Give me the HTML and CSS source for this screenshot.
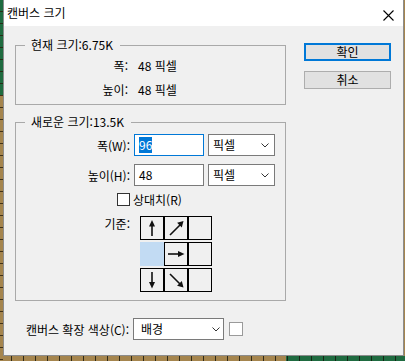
FILE: index.html
```html
<!DOCTYPE html>
<html lang="ko">
<head>
<meta charset="utf-8">
<title>캔버스 크기</title>
<link rel="stylesheet" href="styles.css">
</head>
<body>
<div class="desktop">
  <div class="dialog">
    <div class="titlebar">
      <span class="title">캔버스 크기</span>
      <svg class="close" width="11" height="11" viewBox="0 0 11 11"><path d="M0.5 0.5 L10.5 10.5 M10.5 0.5 L0.5 10.5" stroke="#000" stroke-width="1.1" fill="none"/></svg>
    </div>
    <div class="body">
      <div class="groups">
        <fieldset class="group g1">
          <legend>현재 크기:6.75K</legend>
          <div class="info-row"><span class="info-lbl">폭:</span><span class="info-val">48 픽셀</span></div>
          <div class="info-row"><span class="info-lbl">높이:</span><span class="info-val">48 픽셀</span></div>
        </fieldset>
        <fieldset class="group g2">
          <legend>새로운 크기:13.5K</legend>
          <div class="field-row first">
            <span class="field-lbl">폭(W):</span>
            <div class="input focus"><span class="sel">96</span></div>
            <div class="select unit"><span>픽셀</span><svg class="chev" width="8" height="5" viewBox="0 0 8 5"><path d="M0.5 0.5 L4 4 L7.5 0.5" stroke="#333" fill="none"/></svg></div>
          </div>
          <div class="field-row">
            <span class="field-lbl">높이(H):</span>
            <div class="input"><span>48</span></div>
            <div class="select unit"><span>픽셀</span><svg class="chev" width="8" height="5" viewBox="0 0 8 5"><path d="M0.5 0.5 L4 4 L7.5 0.5" stroke="#333" fill="none"/></svg></div>
          </div>
          <div class="check-row">
            <span class="checkbox"></span><span class="check-lbl">상대치(R)</span>
          </div>
          <div class="anchor-row">
            <span class="anchor-lbl">기준:</span>
            <div class="anchor-grid">
              <div class="anchor-line">
                <div class="cell"><svg viewBox="0 0 22 22" width="22" height="22"><path d="M11 19 L11 8" stroke="#111" stroke-width="1.6"/><path d="M11 3 L8 9.5 L14 9.5 Z" fill="#111"/></svg></div>
                <div class="cell"><svg viewBox="0 0 22 22" width="22" height="22"><path d="M5 18 L15.5 7.5" stroke="#111" stroke-width="1.6"/><path d="M18.5 4 L16.8 10.4 L12.1 5.7 Z" fill="#111"/></svg></div>
                <div class="cell"></div>
              </div>
              <div class="anchor-line">
                <div class="cell selected"></div>
                <div class="cell"><svg viewBox="0 0 22 22" width="22" height="22"><path d="M3 11 L14 11" stroke="#111" stroke-width="1.6"/><path d="M19.5 11 L13 8 L13 14 Z" fill="#111"/></svg></div>
                <div class="cell"></div>
              </div>
              <div class="anchor-line">
                <div class="cell"><svg viewBox="0 0 22 22" width="22" height="22"><path d="M11 3 L11 14" stroke="#111" stroke-width="1.6"/><path d="M11 19.5 L8 13 L14 13 Z" fill="#111"/></svg></div>
                <div class="cell"><svg viewBox="0 0 22 22" width="22" height="22"><path d="M5 5 L15.5 15.5" stroke="#111" stroke-width="1.6"/><path d="M18.5 18.5 L12.1 16.8 L16.8 12.1 Z" fill="#111"/></svg></div>
                <div class="cell"></div>
              </div>
            </div>
          </div>
        </fieldset>
        <div class="bottom-row">
          <span class="field-lbl">캔버스 확장 색상(C):</span>
          <div class="select ext"><span>배경</span><svg class="chev" width="8" height="5" viewBox="0 0 8 5"><path d="M0.5 0.5 L4 4 L7.5 0.5" stroke="#333" fill="none"/></svg></div>
          <span class="swatch"></span>
        </div>
      </div>
      <div class="buttons">
        <div class="btn default">확인</div>
        <div class="btn">취소</div>
      </div>
    </div>
  </div>
</div>
</body>
</html>
```

FILE: styles.css
```css
html, body {
  margin: 0;
  padding: 0;
}

body {
  font-family: "Noto Sans CJK KR", "Noto Sans", sans-serif;
  font-size: 12px;
  color: #000;
}

.desktop {
  width: 405px;
  height: 361px;
  overflow: hidden;
  background:
    repeating-linear-gradient(to bottom, transparent 0 11px, rgba(40, 28, 10, 0.8) 11px 12px) 0 0 / 3px 100% no-repeat,
    repeating-linear-gradient(to right, transparent 0 11px, rgba(20, 20, 10, 0.8) 11px 12px) 0 356px / 100% 5px no-repeat,
    linear-gradient(#1f6b40, #1f6b40) 0 0 / 3px 95px no-repeat,
    linear-gradient(#1f6b40, #1f6b40) 286px 356px / 119px 5px no-repeat,
    #a5854e;
}

.dialog {
  box-sizing: border-box;
  margin-left: 3px;
  width: 401px;
  height: 356px;
  background: #f0f0f0;
  border: 1px solid #8c8c8c;
  border-top: none;
}

.titlebar {
  height: 26px;
  background: #fff;
  display: flex;
  align-items: center;
  justify-content: space-between;
  padding: 0 9px 0 3px;
}

.title {
  line-height: 16px;
  margin-top: -1px;
}

.close {
  display: block;
  margin-top: 5px;
}

.body {
  display: flex;
  padding-left: 11px;
}

.groups {
  width: 271px;
}

.group {
  margin: 0;
  padding: 0;
  border: 1px solid #a9a9a9;
  min-inline-size: 0;
}

.group legend {
  margin-left: 9px;
  padding: 0 7px 0 6px;
  line-height: 16px;
}

.g1 {
  margin-top: 11px;
  padding-bottom: 3px;
}

.info-row {
  display: flex;
  height: 24px;
  align-items: center;
}

.info-lbl {
  width: 112px;
  text-align: right;
}

.info-val {
  margin-left: 10px;
}

.g2 {
  margin-top: 9px;
  padding-bottom: 8px;
}

.field-row {
  display: flex;
  align-items: center;
  height: 22px;
  margin-top: 8px;
}

.field-row.first {
  margin-top: 4px;
}

.field-lbl {
  width: 114px;
  text-align: right;
  flex: none;
}

.input {
  box-sizing: border-box;
  width: 70px;
  height: 22px;
  margin-left: 4px;
  background: #fff;
  border: 1px solid #7a7a7a;
  padding-left: 4px;
  display: flex;
  align-items: center;
  line-height: 16px;
}

.input.focus {
  border-color: #0078d7;
}

.sel {
  background: #0078d7;
  color: #fff;
}

.select {
  box-sizing: border-box;
  height: 22px;
  background: #fff;
  border: 1px solid #7a7a7a;
  display: flex;
  align-items: center;
  justify-content: space-between;
  line-height: 16px;
}

.select.unit {
  width: 67px;
  margin-left: 4px;
  padding: 0 5px 0 4px;
}

.select.ext {
  width: 91px;
  margin-left: 4px;
  padding: 0 3px 0 7px;
}

.chev {
  display: block;
}

.check-row {
  display: flex;
  align-items: center;
  height: 13px;
  margin-top: 7px;
  padding-left: 101px;
}

.checkbox {
  box-sizing: border-box;
  width: 13px;
  height: 13px;
  border: 1px solid #333;
  background: #fff;
  flex: none;
}

.check-lbl {
  margin-left: 3px;
  line-height: 16px;
}

.anchor-row {
  display: flex;
  align-items: flex-start;
  margin-top: 10px;
}

.anchor-lbl {
  width: 114px;
  text-align: right;
  line-height: 16px;
  flex: none;
}

.anchor-grid {
  margin-left: 10px;
  display: flex;
  flex-direction: column;
  gap: 2px;
}

.anchor-line {
  display: flex;
}

.cell {
  box-sizing: border-box;
  width: 24px;
  height: 24px;
  border: 1px solid #000;
}

.cell svg {
  display: block;
}

.cell.selected {
  background: #c2dbf3;
  border-color: #c2dbf3;
}

.bottom-row {
  display: flex;
  align-items: center;
  height: 22px;
  margin-top: 17px;
}

.swatch {
  box-sizing: border-box;
  width: 14px;
  height: 14px;
  margin-left: 5px;
  background: #fff;
  border: 1px solid #9a9a9a;
}

.buttons {
  margin-left: 18px;
  width: 87px;
  padding-top: 17px;
}

.btn {
  box-sizing: border-box;
  height: 18px;
  background: #e1e1e1;
  border: 1px solid #adadad;
  display: flex;
  align-items: center;
  justify-content: center;
  line-height: 14px;
  margin-bottom: 10px;
}

.btn.default {
  border: 2px solid #0078d7;
}
```
